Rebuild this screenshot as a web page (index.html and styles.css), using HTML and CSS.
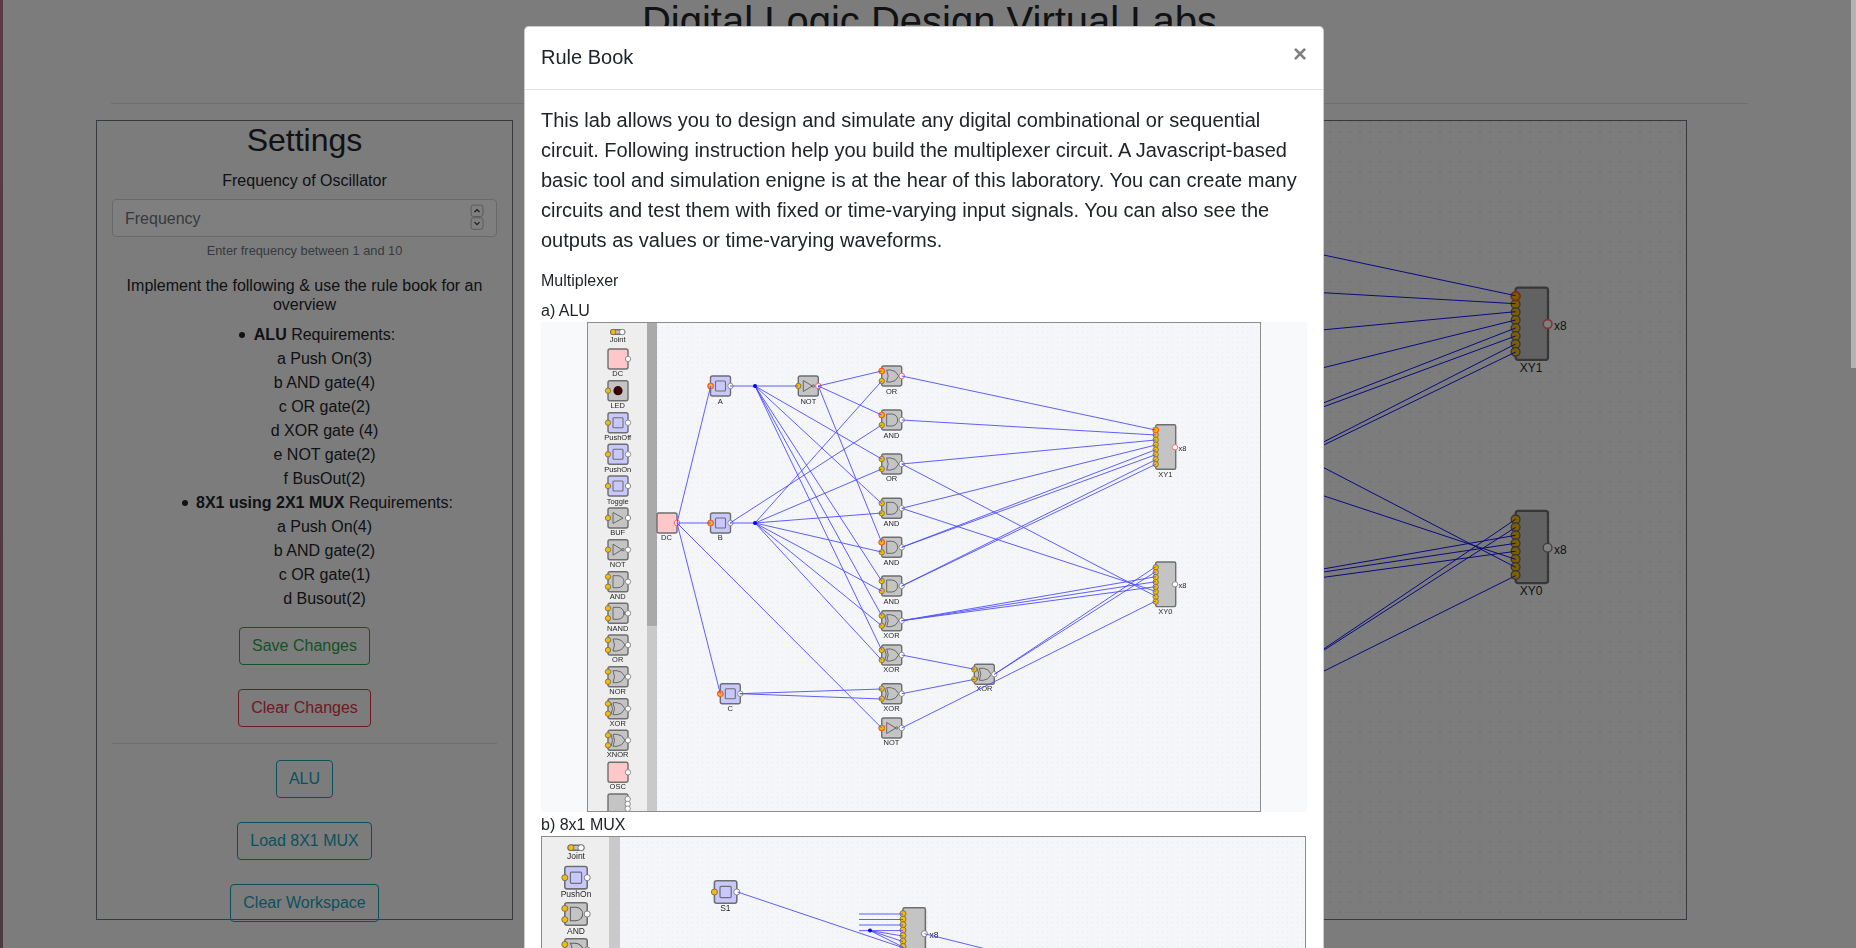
FILE: index.html
```html
<!DOCTYPE html>
<html lang="en">
<head>
<meta charset="utf-8">
<title>Digital Logic Design Virtual Labs</title>
<link rel="stylesheet" href="styles.css">
</head>
<body>
<svg class="defs" aria-hidden="true">
  <defs>
    <pattern id="dots5" width="5" height="5" patternUnits="userSpaceOnUse"><rect x="2" y="2" width="1" height="1" fill="#e7e9ed"/></pattern>
    <circle id="in" r="2.7" class="pin-in"/>
    <circle id="hot" r="2.7" class="pin-hot"/>
    <circle id="out" r="2.7" class="pin-out"/>
    <circle id="red" r="2.7" class="pin-red"/>
    <rect id="box" x="-10" y="-10" width="20" height="20" rx="2" class="box"/>
    <path id="s-and" d="M-5-6H0A6 6 0 0 1 0 6H-5Z" class="sym"/>
    <path id="s-or" d="M-5-6H-1Q4-6 7 0Q4 6-1 6H-5Q-2 0-5-6Z" class="sym"/>
    <path id="s-x" d="M-7-6Q-4 0-7 6" class="sym"/>
    <g id="pins2"><use href="#in" x="-10" y="-5"/><use href="#in" x="-10" y="5"/><use href="#out" x="10"/></g>
    <g id="pins1"><use href="#in" x="-10"/><use href="#out" x="10"/></g>
    <g id="and"><use href="#box"/><use href="#s-and"/><use href="#pins2"/></g>
    <g id="or"><use href="#box"/><use href="#s-or"/><use href="#pins2"/></g>
    <g id="xor"><use href="#box"/><use href="#s-or"/><use href="#s-x"/><use href="#pins2"/></g>
    <g id="nand"><use href="#box"/><use href="#s-and"/><circle cx="7" r="1.2" class="sym"/><use href="#pins2"/></g>
    <g id="nor"><use href="#box"/><use href="#s-or"/><circle cx="8" r="1.2" class="sym"/><use href="#pins2"/></g>
    <g id="xnor"><use href="#box"/><use href="#s-or"/><use href="#s-x"/><circle cx="8" r="1.2" class="sym"/><use href="#pins2"/></g>
    <g id="buf"><use href="#box"/><path d="M-5-5.5L5 0L-5 5.5Z" class="sym"/><use href="#pins1"/></g>
    <g id="not"><use href="#box"/><path d="M-5-5.5L4 0L-5 5.5Z" class="sym"/><circle cx="5" r="1.2" class="sym"/><use href="#pins1"/></g>
    <g id="push"><rect x="-10" y="-10" width="20" height="20" rx="2" class="box box-push"/><rect x="-5" y="-5" width="10" height="10" rx="1" class="inner"/><use href="#pins1"/></g>
    <g id="dc"><rect x="-10" y="-10" width="20" height="20" rx="2" class="box box-dc"/><use href="#out" x="10"/></g>
    <g id="led"><use href="#box"/><circle r="4.6" class="led"/><use href="#in" x="-10"/></g>
    <g id="joint"><rect x="-7" y="-2.2" width="14" height="4.4" rx="2.2" class="box"/><use href="#in" x="-4.5"/><use href="#out" x="4.5"/></g>
    <g id="xyb"><rect x="0" y="0" width="20" height="44.6" rx="1.5" class="box"/><use href="#in" y="5.3"/><use href="#in" y="10.2"/><use href="#in" y="15.1"/><use href="#in" y="20"/><use href="#in" y="24.9"/><use href="#in" y="29.8"/><use href="#in" y="34.7"/><use href="#in" y="39.6"/></g>
  </defs>
</svg>

<div class="page">
  <div class="strip"></div>
  <main class="container">
    <h1 class="title">Digital Logic Design Virtual Labs</h1>
    <hr class="rule">
    <div class="columns">
      <section class="settings">
        <h2 class="settings-title">Settings</h2>
        <h6 class="label">Frequency of Oscillator</h6>
        <div class="form-group">
          <div class="input-wrap">
            <input class="form-control" type="number" placeholder="Frequency">
            <svg class="spinner" viewBox="0 0 14 26" width="14" height="26" aria-hidden="true">
              <rect x="1" y="1" width="12" height="11.5" rx="2.5" class="spin-box"/>
              <rect x="1" y="13.8" width="12" height="11.5" rx="2.5" class="spin-box"/>
              <path d="M4.5 8L7 5.5L9.5 8" class="spin-chev"/>
              <path d="M4.5 18.2L7 20.7L9.5 18.2" class="spin-chev"/>
            </svg>
          </div>
          <small class="hint">Enter frequency between 1 and 10</small>
        </div>
        <h6 class="intro">Implement the following &amp; use the rule book for an overview</h6>
        <ul class="reqs">
          <li><b>ALU</b> Requirements:<br>a Push On(3)<br>b AND gate(4)<br>c OR gate(2)<br>d XOR gate (4)<br>e NOT gate(2)<br>f BusOut(2)</li>
          <li><b>8X1 using 2X1 MUX</b> Requirements:<br>a Push On(4)<br>b AND gate(2)<br>c OR gate(1)<br>d Busout(2)</li>
        </ul>
        <div class="actions">
          <button class="btn btn-success">Save Changes</button>
          <button class="btn btn-danger">Clear Changes</button>
        </div>
        <hr class="rule rule-inner">
        <div class="actions">
          <button class="btn btn-info">ALU</button>
          <button class="btn btn-info">Load 8X1 MUX</button>
          <button class="btn btn-info">Clear Workspace</button>
        </div>
      </section>
      <section class="workspace">
        <svg class="workspace-svg" viewBox="529 121 1157 798" width="1157" height="798">
          <use href="#xyb" transform="translate(1515.6 287.7) scale(1.62)"/>
          <use href="#hot" transform="translate(1515.6 296.2) scale(1.62)"/>
          <use href="#red" transform="translate(1547.6 324) scale(1.62)"/>
          <text x="1531" y="372" class="lb-bg">XY1</text>
          <text x="1554" y="330" class="lb-bg lb-left">x8</text>
          <use href="#xyb" transform="translate(1515.6 510.8) scale(1.62)"/>
          <use href="#out" transform="translate(1547.6 547.7) scale(1.62)"/>
          <text x="1531" y="595" class="lb-bg">XY0</text>
          <text x="1554" y="554" class="lb-bg lb-left">x8</text>
          <path class="wire-bg" d="M1300 250L1515.6 295.7M1300 291.4L1515.6 303.7M1300 332L1515.6 311.7M1300 373.5L1515.6 320M1300 412L1515.6 328M1300 415.5L1515.6 336M1300 454L1515.6 344M1300 456.5L1515.6 352M1300 455.3L1515.6 567.3M1300 488L1515.6 559.3M1300 573L1515.6 535.3M1300 575.5L1515.6 543.3M1300 580.5L1515.6 551.3M1300 665L1515.6 519.3M1300 665.5L1515.6 527.3M1300 683L1515.6 575.7"/>
        </svg>
      </section>
    </div>
  </main>
</div>

<div class="backdrop"></div>

<div class="modal">
  <div class="modal-dialog">
    <header class="modal-header">
      <h5 class="modal-title">Rule Book</h5>
      <button class="close">&times;</button>
    </header>
    <div class="modal-body">
      <p class="lead">This lab allows you to design and simulate any digital combinational or sequential circuit. Following instruction help you build the multiplexer circuit. A Javascript-based basic tool and simulation enigne is at the hear of this laboratory. You can create many circuits and test them with fixed or time-varying input signals. You can also see the outputs as values or time-varying waveforms.</p>
      <p class="sub">Multiplexer</p>
      <p class="cap">a) ALU</p>
      <svg class="shot" viewBox="541 322 766 490" width="766" height="490">
        <rect x="541" y="322" width="766" height="490" class="shot-bg"/>
        <rect x="588" y="322.5" width="672.5" height="488.5" class="canvas"/>
        <rect x="588" y="322.5" width="672.5" height="488.5" fill="url(#dots5)"/>
        <rect x="588" y="322.5" width="59" height="488.5" class="panel"/>
        <rect x="647" y="322.5" width="10" height="304" class="scroll-thumb"/>
        <rect x="647" y="626.5" width="10" height="184.5" class="scroll-track"/>
        <rect x="587.5" y="322.5" width="673" height="489" class="frame"/>

        <use href="#joint" x="617.7" y="332"/><text x="617.7" y="341.7" class="lb">Joint</text>
        <use href="#dc" x="618" y="359"/><text x="617.7" y="376.4" class="lb">DC</text>
        <use href="#led" x="618" y="390.7"/><text x="617.7" y="408" class="lb">LED</text>
        <use href="#push" x="618" y="422.7"/><text x="617.7" y="440" class="lb">PushOff</text>
        <use href="#push" x="618" y="454.3"/><text x="617.7" y="471.6" class="lb">PushOn</text>
        <use href="#push" x="618" y="486"/><text x="617.7" y="503.5" class="lb">Toggle</text>
        <use href="#buf" x="618" y="518"/><text x="617.7" y="535.3" class="lb">BUF</text>
        <use href="#not" x="618" y="549.7"/><text x="617.7" y="567" class="lb">NOT</text>
        <use href="#and" x="618" y="581.7"/><text x="617.7" y="599" class="lb">AND</text>
        <use href="#nand" x="618" y="613.3"/><text x="617.7" y="630.7" class="lb">NAND</text>
        <use href="#or" x="618" y="645"/><text x="617.7" y="662.4" class="lb">OR</text>
        <use href="#nor" x="618" y="676.7"/><text x="617.7" y="694" class="lb">NOR</text>
        <use href="#xor" x="618" y="708.7"/><text x="617.7" y="725.8" class="lb">XOR</text>
        <use href="#xnor" x="618" y="740.3"/><text x="617.7" y="757.4" class="lb">XNOR</text>
        <use href="#dc" x="618" y="772.3"/><text x="617.7" y="789.3" class="lb">OSC</text>
        <path d="M608 811V796a2 2 0 0 1 2-2H626a2 2 0 0 1 2 2V811" class="box"/>
        <use href="#out" x="627.7" y="799"/><use href="#out" x="627.7" y="804"/><use href="#out" x="627.7" y="808.7"/>

        <use href="#dc" x="667" y="523"/><text x="666.5" y="540" class="lb">DC</text>
        <use href="#push" x="720.5" y="386"/><text x="720.3" y="403.5" class="lb">A</text>
        <use href="#push" x="720.5" y="523"/><text x="720.3" y="540" class="lb">B</text>
        <use href="#push" x="730.3" y="693.7"/><text x="730.3" y="711" class="lb">C</text>
        <use href="#not" x="808.3" y="386"/><text x="808.3" y="403.5" class="lb">NOT</text>
        <use href="#or" x="891.7" y="376"/><text x="891.5" y="393.5" class="lb">OR</text>
        <use href="#and" x="891.7" y="420"/><text x="891.5" y="437.8" class="lb">AND</text>
        <use href="#or" x="891.7" y="464"/><text x="891.5" y="481" class="lb">OR</text>
        <use href="#and" x="891.7" y="508.3"/><text x="891.5" y="525.5" class="lb">AND</text>
        <use href="#and" x="891.7" y="547.3"/><text x="891.5" y="564.5" class="lb">AND</text>
        <use href="#and" x="891.7" y="586"/><text x="891.5" y="603.5" class="lb">AND</text>
        <use href="#xor" x="891.7" y="620.7"/><text x="891.5" y="637.8" class="lb">XOR</text>
        <use href="#xor" x="891.7" y="655"/><text x="891.5" y="671.8" class="lb">XOR</text>
        <use href="#xor" x="891.7" y="693.7"/><text x="891.5" y="710.8" class="lb">XOR</text>
        <use href="#not" x="891.7" y="728"/><text x="891.5" y="745" class="lb">NOT</text>
        <use href="#xor" x="984.3" y="674.3"/><text x="984.3" y="691" class="lb">XOR</text>

        <use href="#hot" x="710.7" y="386"/><use href="#hot" x="710.7" y="523"/><use href="#hot" x="720.3" y="693.7"/>
        <use href="#hot" x="881.7" y="371"/><use href="#hot" x="881.7" y="415"/><use href="#hot" x="881.7" y="542.3"/><use href="#hot" x="881.7" y="728"/>
        <use href="#red" x="677" y="523"/><use href="#red" x="818.3" y="386"/><use href="#red" x="901.7" y="376"/>

        <use href="#xyb" x="1155.7" y="424.7"/><use href="#hot" x="1155.7" y="430"/><use href="#red" x="1175" y="447.3"/>
        <text x="1165.3" y="476.5" class="lb">XY1</text><text x="1178.5" y="450.5" class="lb lb-left">x8</text>
        <use href="#xyb" x="1155.7" y="562"/><use href="#out" x="1175" y="584.3"/>
        <text x="1165.3" y="614" class="lb">XY0</text><text x="1178.5" y="587.5" class="lb lb-left">x8</text>

        <path class="wire" d="M677 523L710.7 386M677 523H710.7M677 523L720.3 693.7M677 523L881.7 728M730 386H798M818.3 386L881.7 371M818.3 386L881.7 415M818.3 386L881.7 542.3M730 523L881.7 425M730 523H755M755 523L881.7 381M755 523L881.7 469M755 523L881.7 513M755 523L881.7 552M755 523L881.7 591M755 523L881.7 625.7M755 523L881.7 660M755 386L881.7 459M755 386L881.7 503.5M755 386L881.7 581M755 386L881.7 615.7M755 386L881.7 650M739.7 693.7L881.7 689M739.7 693.7L881.7 699M901.7 655L974.7 669.3M901.7 693.7L974.7 679.3"/>
        <path class="wire" d="M901.7 376L1155.7 430M901.7 420L1155.7 435M901.7 464L1155.7 440M901.7 508.3L1155.7 445M901.7 547.3L1155.7 449.7M901.7 547.3L1155.7 454.7M901.7 586L1155.7 459.7M901.7 586L1155.7 464.3M901.7 464L1155.7 596.3M901.7 508.3L1155.7 591.3M901.7 620.7L1155.7 576.7M901.7 620.7L1155.7 581.7M901.7 620.7L1155.7 586.7M994.3 674.3L1155.7 566.7M994.3 674.3L1155.7 571.7M901.7 728L1155.7 601"/>
        <circle cx="755" cy="386" r="2" class="jdot"/><circle cx="755" cy="523" r="2" class="jdot"/>
      </svg>
      <p class="cap cap-b">b) 8x1 MUX</p>
      <svg class="shot" viewBox="541 836 766 1560" width="766" height="1560">
        <rect x="541" y="836.5" width="764.5" height="700" class="canvas"/>
        <rect x="541" y="836.5" width="764.5" height="700" fill="url(#dots5)"/>
        <rect x="541" y="836.5" width="68" height="700" class="panel"/>
        <rect x="609" y="836.5" width="11" height="700" class="scroll-track"/>
        <rect x="541.5" y="836.5" width="764" height="700" class="frame"/>
        <use href="#joint" transform="translate(576 847.7) scale(1.12)"/><text x="576" y="859" class="lb lb-b">Joint</text>
        <use href="#push" transform="translate(576 877.7) scale(1.12)"/><text x="576" y="897.3" class="lb lb-b">PushOn</text>
        <use href="#and" transform="translate(576 914) scale(1.12)"/><text x="576" y="933.7" class="lb lb-b">AND</text>
        <use href="#or" transform="translate(576 950) scale(1.12)"/>
        <use href="#push" transform="translate(725.6 892) scale(1.12)"/><text x="725.4" y="911.3" class="lb lb-b">S1</text>
        <g transform="translate(903 907.7) scale(1.12)"><use href="#xyb"/></g>
        <use href="#out" transform="translate(924.4 933.7) scale(1.12)"/>
        <text x="929.5" y="937.5" class="lb lb-b lb-left">x8</text>
        <path class="wire" d="M737.5 892L915 951.7M859 914H903M859 919.5H903M859 925H903M859 930.6H903M870 930.6L903 936M870 930.6L903 941.6M870 930.6L903 947M924.4 933.7L990 950"/>
        <circle cx="870" cy="930.6" r="2" class="jdot"/>
      </svg>
    </div>
  </div>
</div>
<div class="modal-scrollbar"></div>
</body>
</html>
```
FILE: styles.css
```css
* { box-sizing: border-box; }
html, body { margin: 0; height: 100%; }
body {
  overflow: hidden;
  background: #f8f9fa;
  color: #212529;
  font-family: "Liberation Sans", Arial, sans-serif;
  font-size: 16px;
  line-height: 1.5;
}
.defs { position: absolute; width: 0; height: 0; }

.page { display: flex; min-height: 100%; }
.strip { width: 3px; flex: none; background: linear-gradient(#b47584, #947484); }
.container { width: 1667px; margin-left: 93px; padding: 0 15px; flex: none; }

.title {
  margin: -3px 0 58px;
  font-size: 40px;
  font-weight: 500;
  line-height: 1.2;
  text-align: center;
}
.rule { margin: 0 0 16px; border: 0; border-top: 1px solid rgba(0, 0, 0, .1); }
.columns { display: flex; gap: 15px; margin: 0 -15px; width: 1591px; }

.settings {
  width: 417px;
  height: 800px;
  flex: none;
  padding: 0 15px;
  border: 1px solid #6c757d;
  text-align: center;
}
.settings-title { margin: 0 0 12px; font-size: 32px; font-weight: 500; line-height: 1.2; }
.label { margin: 0 0 8px; font-size: 16px; font-weight: 500; line-height: 1.2; }
.form-group { margin-bottom: 16px; }
.input-wrap { position: relative; }
.form-control {
  display: block;
  width: 100%;
  height: 38px;
  padding: 7px 12px 5px;
  border: 1px solid #ced4da;
  border-radius: 4px;
  background: #fff;
  color: #495057;
  font: inherit;
  appearance: textfield;
}
.form-control::placeholder { color: #6c757d; opacity: 1; }
.form-control::-webkit-inner-spin-button { display: none; }
.spinner { position: absolute; right: 13px; top: 5px; }
.spin-box { fill: none; stroke: #b4b4b4; stroke-width: 1; }
.spin-chev { fill: none; stroke: #333; stroke-width: 1.2; }
.hint { display: block; margin-top: 4px; color: #6c757d; font-size: 12.8px; }
.intro { margin: 0 0 9px; font-size: 16px; font-weight: 500; line-height: 1.2; }
.reqs { margin: 0 0 16px; padding-left: 40px; list-style: none; }
.reqs li::before {
  content: "";
  display: inline-block;
  width: 6px;
  height: 6px;
  margin: 0 8.5px 2px -14.5px;
  border-radius: 50%;
  background: #212529;
  vertical-align: middle;
}
.actions { display: flex; flex-direction: column; align-items: center; gap: 24px; }
.rule-inner { margin: 16px 0; }
.btn {
  height: 38px;
  padding: 6px 12px;
  border: 1px solid;
  border-radius: 4px;
  background: transparent;
  font: inherit;
}
.btn-success { color: #28a745; border-color: #28a745; }
.btn-danger { color: #dc3545; border-color: #dc3545; }
.btn-info { color: #17a2b8; border-color: #17a2b8; }

.workspace {
  width: 1159px;
  height: 800px;
  flex: none;
  border: 1px solid #6c757d;
  background-image: radial-gradient(circle at 1px 1px, #e9eaec .7px, transparent 1px);
  background-size: 10px 10px;
}
.workspace-svg { display: block; }
.wire-bg { fill: none; stroke: #1212ff; stroke-width: 1; }
.lb-bg { font-size: 12px; fill: #212529; text-anchor: middle; }

.backdrop { position: fixed; inset: 0; background: rgba(0, 0, 0, .5); }
.modal { position: fixed; inset: 0; overflow: hidden; padding-right: 8px; }
.modal-scrollbar { position: fixed; top: 0; right: 0; width: 5px; height: 368px; background: #b3b3b3; }
.modal-dialog {
  width: 800px;
  margin: 26px auto 28px;
  background: #fff;
  border: 1px solid rgba(0, 0, 0, .2);
  border-radius: 4.8px;
}
.modal-header {
  display: flex;
  justify-content: space-between;
  padding: 15px 16px 17px;
  border-bottom: 1px solid #dee2e6;
}
.modal-title { margin: 0; font-size: 20px; font-weight: 500; line-height: 1.5; }
.close {
  margin: -19px -16px -13px auto;
  padding: 16px;
  border: 0;
  background: transparent;
  color: #000;
  opacity: .5;
  font: bold 24px/1 "Liberation Sans", Arial, sans-serif;
}
.modal-body { padding: 15px 16px 16px; }
.lead { margin: 0 0 14px; font-size: 20px; font-weight: 300; line-height: 1.5; }
.sub { margin: 0 0 6px; }
.cap { margin: 0 0 -1px; }
.cap-b { padding-top: 1px; }
.shot { display: block; }

.shot-bg { fill: #f8f9fb; }
.canvas { fill: #f5f6f9; }
.panel { fill: #eeeeee; }
.scroll-thumb { fill: #a9a9a9; }
.scroll-track { fill: #c9c9c9; }
.frame { fill: none; stroke: #8c8c8c; stroke-width: 1; }
.box { fill: #c4c4c4; stroke: #6e6e6e; stroke-width: 1.4; }
.box-push { fill: #c8c8ff; }
.box-dc { fill: #ffc8c8; }
.inner { fill: #c8c8ff; stroke: #6e6e6e; stroke-width: 1.1; }
.sym { fill: none; stroke: #5e5e5e; stroke-width: .9; }
.led { fill: #3a0000; }
.pin-in { fill: #f5bc00; stroke: #6a6a6a; stroke-width: .8; }
.pin-hot { fill: #f5bc00; stroke: #ff5a30; stroke-width: 1.1; }
.pin-out { fill: #fff; stroke: #777; stroke-width: .8; }
.pin-red { fill: #fff; stroke: #ff6b6b; stroke-width: 1; }
.wire { fill: none; stroke: #4d4dff; stroke-width: .9; }
.jdot { fill: #0000ff; }
.lb { font-size: 7.5px; fill: #262626; text-anchor: middle; }
.lb-b { font-size: 8.5px; }
.lb-left { text-anchor: start; }
```
